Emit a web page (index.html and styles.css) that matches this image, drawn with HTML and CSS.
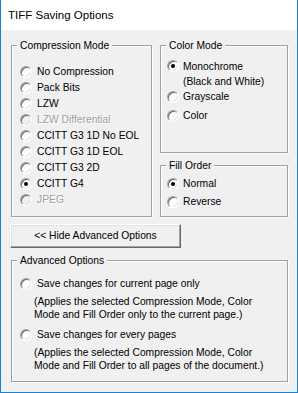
FILE: index.html
```html
<!DOCTYPE html>
<html>
<head>
<meta charset="utf-8">
<link rel="stylesheet" href="styles.css">
</head>
<body>
<div class="window">
  <div class="titlebar">TIFF Saving Options</div>
  <div class="content">
    <div class="top">
      <div class="group g-compression">
        <span class="legend">Compression Mode</span>
        <ul class="options">
          <li class="opt"><span class="radio"></span><span class="lbl">No Compression</span></li>
          <li class="opt"><span class="radio"></span><span class="lbl">Pack Bits</span></li>
          <li class="opt"><span class="radio"></span><span class="lbl">LZW</span></li>
          <li class="opt disabled"><span class="radio"></span><span class="lbl">LZW Differential</span></li>
          <li class="opt"><span class="radio"></span><span class="lbl">CCITT G3 1D No EOL</span></li>
          <li class="opt"><span class="radio"></span><span class="lbl">CCITT G3 1D EOL</span></li>
          <li class="opt"><span class="radio"></span><span class="lbl">CCITT G3 2D</span></li>
          <li class="opt"><span class="radio checked"></span><span class="lbl">CCITT G4</span></li>
          <li class="opt disabled"><span class="radio"></span><span class="lbl">JPEG</span></li>
        </ul>
      </div>
      <div class="right-col">
        <div class="group g-color">
          <span class="legend">Color Mode</span>
          <ul class="options">
            <li class="opt opt-mono"><span class="radio checked"></span><span class="lbl">Monochrome<br>(Black and White)</span></li>
            <li class="opt opt-gray"><span class="radio"></span><span class="lbl">Grayscale</span></li>
            <li class="opt opt-color"><span class="radio"></span><span class="lbl">Color</span></li>
          </ul>
        </div>
        <div class="group g-fill">
          <span class="legend">Fill Order</span>
          <ul class="options">
            <li class="opt"><span class="radio checked"></span><span class="lbl">Normal</span></li>
            <li class="opt"><span class="radio"></span><span class="lbl">Reverse</span></li>
          </ul>
        </div>
      </div>
    </div>
    <button class="btn">&lt;&lt; Hide Advanced Options</button>
    <div class="group g-adv">
      <span class="legend">Advanced Options</span>
      <div class="adv-item">
        <div class="opt"><span class="radio"></span><span class="lbl">Save changes for current page only</span></div>
        <p class="desc">(Applies the selected Compression Mode, Color<br>Mode and Fill Order only to the current page.)</p>
      </div>
      <div class="adv-item second">
        <div class="opt"><span class="radio"></span><span class="lbl">Save changes for every pages</span></div>
        <p class="desc">(Applies the selected Compression Mode, Color<br>Mode and Fill Order to all pages of the document.)</p>
      </div>
    </div>
  </div>
</div>
</body>
</html>
```

FILE: styles.css
```css
* { box-sizing: border-box; }
html, body { margin: 0; padding: 0; }
body {
  width: 298px;
  height: 393px;
  background: #ffffff;
  font-family: "Liberation Sans", Arial, sans-serif;
  font-size: 10.3px;
  color: #000;
  overflow: hidden;
}
.window {
  width: 298px;
  height: 393px;
  display: flex;
  flex-direction: column;
  border-left: 1px solid #1883d7;
  border-right: 1px solid #1883d7;
  border-bottom: 1px solid #1883d7;
}
.titlebar {
  height: 30px;
  flex: none;
  background: #fff;
  padding-left: 7px;
  font-size: 11.5px;
  line-height: 30px;
  color: #000;
}
.content {
  flex: 1;
  background: #f0f0f0;
  padding: 15px 0 0 10px;
}
.top {
  display: flex;
  gap: 8px;
  height: 172px;
}
.group {
  position: relative;
  border: 1px solid #a0a0a0;
  box-shadow: inset 1px 1px #fff, 1px 1px #fff;
}
.legend {
  position: absolute;
  top: -7px;
  left: 5px;
  height: 13px;
  line-height: 13px;
  padding: 0 3px 0 3px;
  background: #f0f0f0;
  white-space: nowrap;
}
.options {
  list-style: none;
  margin: 0;
  padding: 0;
}
.opt {
  display: flex;
  align-items: flex-start;
  line-height: 14px;
  height: 16px;
}
.radio {
  flex: none;
  position: relative;
  width: 12px;
  height: 12px;
  margin-top: 1px;
  border-radius: 50%;
  border: 1px solid;
  border-color: #a0a0a0 #fff #fff #a0a0a0;
  background: #fff;
  box-shadow: inset 1px 1px #696969, inset -1px -1px #e3e3e3;
}
.radio.checked::after {
  content: "";
  position: absolute;
  left: 3px;
  top: 3px;
  width: 4px;
  height: 4px;
  border-radius: 50%;
  background: #000;
}
.lbl {
  margin-left: 5px;
  white-space: nowrap;
}
.disabled .lbl {
  color: #a0a0a0;
  text-shadow: 1px 1px 0 #fff;
}
.disabled .radio {
  background: #f0f0f0;
}
.g-compression {
  width: 141px;
  padding: 19px 0 0 8px;
}
.right-col {
  width: 128px;
  display: flex;
  flex-direction: column;
  gap: 12px;
}
.g-color {
  height: 108px;
  padding: 13px 0 0 6px;
}
.g-color .opt-mono {
  height: 31px;
  line-height: 15px;
}
.g-color .opt-mono .radio { margin-top: 1px; }
.g-color .opt-color { margin-top: 3px; }
.g-color .lbl { margin-left: 4px; }
.g-fill {
  height: 52px;
  padding: 11px 0 0 6px;
}
.g-fill .opt { height: 18px; }
.g-fill .lbl { margin-left: 4px; }
.btn {
  display: block;
  margin: 7px 0 0 -1px;
  width: 171px;
  height: 24px;
  padding: 0;
  font-family: inherit;
  font-size: 10.3px;
  color: #000;
  background: #f0f0f0;
  border: 1px solid;
  border-color: #fff #696969 #696969 #fff;
  box-shadow: inset -1px -1px #a0a0a0, inset 1px 1px #e3e3e3;
  line-height: 20px;
}
.g-adv {
  margin-top: 12px;
  width: 277px;
  height: 122px;
  padding: 16px 0 0 8px;
}
.adv-item.second { margin-top: 7px; }
.desc {
  margin: 5px 0 0 14px;
  line-height: 12.5px;
  white-space: nowrap;
}
.adv-item .opt { height: 14px; }
```
